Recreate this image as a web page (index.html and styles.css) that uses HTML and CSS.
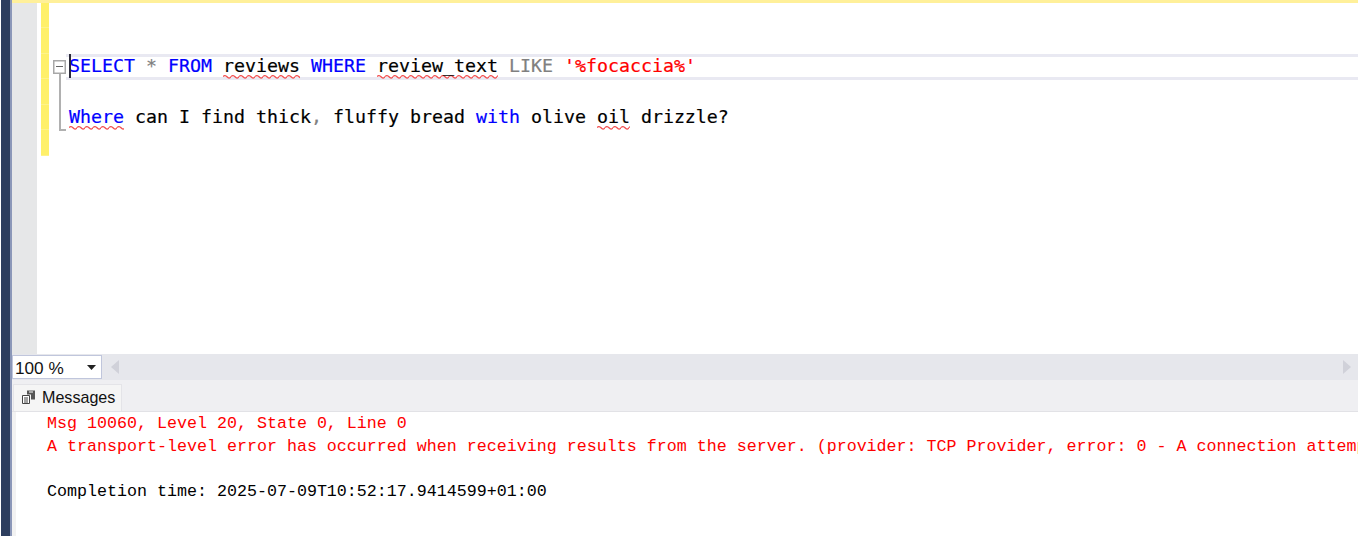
FILE: index.html
```html
<!DOCTYPE html>
<html lang="en">
<head>
<meta charset="utf-8">
<title>Query</title>
<link rel="stylesheet" href="styles.css">
</head>
<body>
<div class="app">
  <div class="rail"></div>
  <div class="main">
    <div class="topbar"></div>
    <div class="editor">
      <div class="gutter"></div>
      <div class="changes"></div>
      <svg class="fold" width="17" height="153" viewBox="0 0 17 153">
        <path d="M11 70v57H17" stroke="#b0b0b0" stroke-width="2" fill="none"/>
        <rect x="4.750" y="57.750" width="11.500" height="12.500" fill="#fff" stroke="#a8a8a8" stroke-width="1.500"/>
        <path d="M7 63.500h7" stroke="#666" fill="none"/>
      </svg>
      <div class="code">
        <div class="row"></div>
        <div class="row"></div>
        <div class="row current"><span class="caret"></span><span class="kw">SELECT</span> <span class="op">*</span> <span class="kw">FROM</span> <span class="sq">reviews</span> <span class="kw">WHERE</span> <span class="sq">review_text</span> <span class="op">LIKE</span> <span class="str">'%focaccia%'</span></div>
        <div class="row"></div>
        <div class="row"><span class="kw sq">Where</span> can I find thick<span class="op">,</span> fluffy bread <span class="kw">with</span> olive <span class="sq">oil</span> drizzle?</div>
        <div class="row"></div>
      </div>
    </div>
    <div class="zoombar">
      <div class="zoom"><span>100 %</span><svg class="caretdown" width="9" height="5" viewBox="0 0 9 5"><path d="M0 0h9L4.500 5z" fill="#222"/></svg></div>
      <svg class="arrow first" width="9" height="14" viewBox="0 0 9 14"><path d="M9 0v14L1 7z" fill="#d0d1d9"/></svg>
      <svg class="arrow" width="9" height="14" viewBox="0 0 9 14"><path d="M0 0v14l8-7z" fill="#d0d1d9"/></svg>
    </div>
    <div class="tabs">
      <div class="tab">
        <svg width="15" height="15" viewBox="0 0 15 15">
          <path d="M1.500 5.500h7v8h-7z" fill="#fff" stroke="#444"/>
          <path d="M3 8h4M3 10h4M3 12h4" stroke="#444" fill="none"/>
          <path d="M6 0.500h8v9h-4v-5H6z" fill="#555"/>
          <path d="M8 2h4" stroke="#fff" fill="none"/>
        </svg>
        <span>Messages</span>
      </div>
    </div>
    <div class="output">
      <div class="line err">Msg 10060, Level 20, State 0, Line 0</div>
      <div class="line err">A transport-level error has occurred when receiving results from the server. (provider: TCP Provider, error: 0 - A connection attempt failed because the connected party did not properly respond)</div>
      <div class="line"></div>
      <div class="line">Completion time: 2025-07-09T10:52:17.9414599+01:00</div>
    </div>
  </div>
</div>
</body>
</html>
```
FILE: styles.css
```css
html, body {
  margin: 0;
  height: 100%;
  overflow: hidden;
  background: #fff;
}
.app {
  display: flex;
  width: 1358px;
  height: 536px;
}
.rail {
  width: 9px;
  margin-left: 1px;
  flex: none;
  background: #2d3e5e;
  border-right: 2px solid #8b97b8;
}
.main {
  flex: 1;
  min-width: 0;
  display: flex;
  flex-direction: column;
  overflow: hidden;
}
.topbar {
  height: 3px;
  margin-left: -2px;
  flex: none;
  background: #fff09a;
}
.editor {
  height: 351px;
  flex: none;
  display: flex;
  background: #fff;
}
.gutter {
  width: 25px;
  flex: none;
  background: #e6e7e8;
}
.changes {
  width: 8px;
  height: 153px;
  margin-left: 4px;
  flex: none;
  background: repeating-linear-gradient(#fff06a 0, #fff06a 24.5px, #fff38a 24.5px, #fff38a 25.500px);
}
.fold {
  flex: none;
  display: block;
}
.code {
  flex: 1;
  min-width: 0;
  font-family: "DejaVu Sans Mono", "Liberation Mono", monospace;
  font-size: 18.27px;
  color: #000;
  -webkit-text-stroke: 0.2px currentColor;
}
.row {
  position: relative;
  height: 25.5px;
  line-height: 23.5px;
  padding-left: 3px;
  white-space: pre;
  box-sizing: border-box;
}
.current {
  line-height: 17.5px;
  border-top: 3px solid #e9e9f2;
  border-bottom: 3px solid #e9e9f2;
}
.caret {
  position: absolute;
  left: 3px;
  top: -3px;
  width: 2px;
  height: 24px;
  background: #2b2b3a;
}
.kw { color: #0000ff; }
.op { color: #808080; }
.str { color: #ff0000; }
.sq {
  padding-bottom: 3px;
  background: url("data:image/svg+xml,%3Csvg xmlns='http://www.w3.org/2000/svg' width='8' height='4'%3E%3Cpath d='M0 1.500C1.300 .3 2.700 .3 4 1.800S6.700 3.700 8 1.500' fill='none' stroke='%23f25050' stroke-width='1.300'/%3E%3C/svg%3E") repeat-x left bottom / 8px 4px;
}
.zoombar {
  height: 26px;
  flex: none;
  display: flex;
  align-items: center;
  background: #e6e7ec;
}
.zoom {
  width: 90px;
  height: 24px;
  box-sizing: border-box;
  flex: none;
  display: flex;
  align-items: center;
  justify-content: space-between;
  padding: 2px 3px 0 2px;
  background: #fff;
  border: 1px solid #c0c6dc;
  font: 17.200px "Liberation Sans", Arial, sans-serif;
  color: #111;
}
.caretdown { margin-right: 2px; margin-top: -2px; }
.arrow { flex: none; }
.first { margin-left: 8px; margin-right: auto; }
.arrow:last-child { margin-right: 6px; }
.tabs {
  height: 32px;
  flex: none;
  display: flex;
  align-items: flex-end;
  box-sizing: border-box;
  padding-left: 1px;
  background: #efeff2;
  border-bottom: 1px solid #e2e2e6;
}
.tab {
  width: 109px;
  height: 27px;
  box-sizing: border-box;
  display: flex;
  align-items: center;
  gap: 6px;
  padding: 0 0 2px 7px;
  background: #f5f5f5;
  border: 1px solid #e4e4e8;
  border-bottom: none;
  font: 16.100px "Liberation Sans", Arial, sans-serif;
  color: #111;
}
.output {
  flex: 1;
  min-height: 0;
  padding: 1px 0 0 31px;
  margin-left: 0;
  border-left: 4px solid #f2f2f2;
  background: #fff;
  font-family: "Liberation Mono", "Courier New", monospace;
  font-size: 16.67px;
  color: #000;
  overflow: hidden;
}
.line {
  height: 22.500px;
  line-height: 22.500px;
  white-space: pre;
}
.err { color: #ff0000; }
```
